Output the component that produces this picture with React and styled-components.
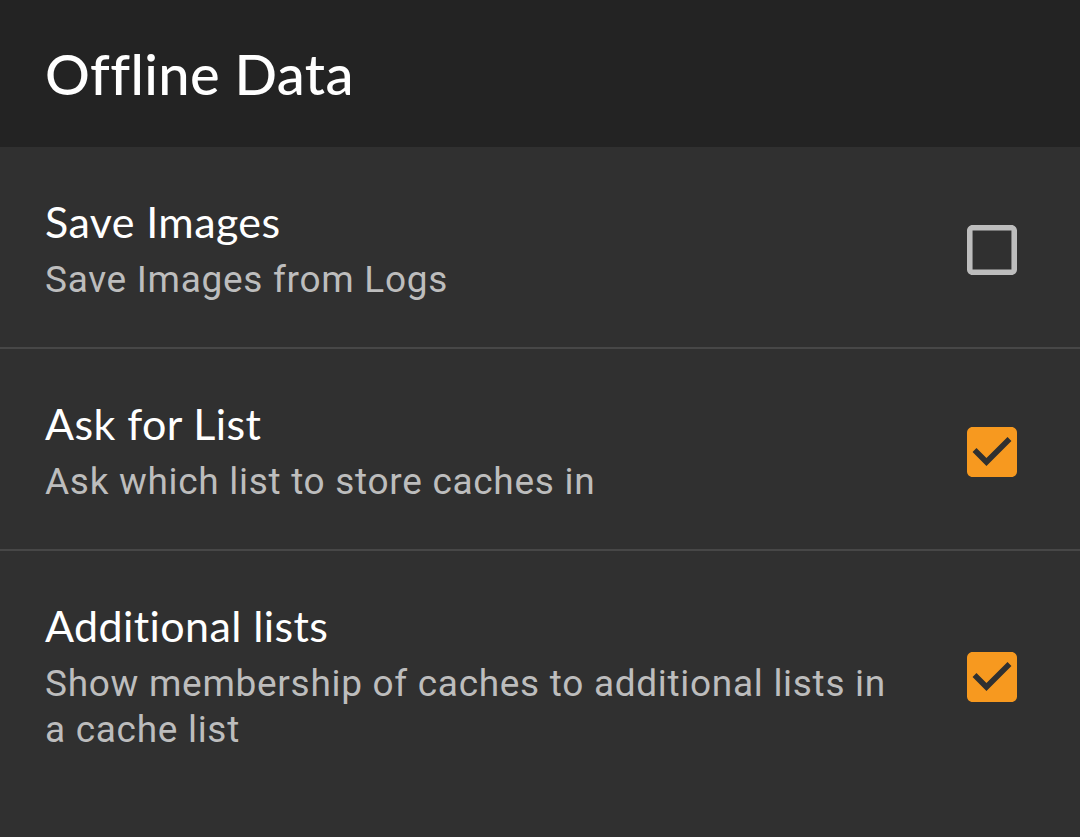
import React from "react";
import styled, { createGlobalStyle } from "styled-components";

const GlobalStyle = createGlobalStyle`
  html, body, #root {
    margin: 0;
    padding: 0;
    min-height: 100%;
    background: #303030;
  }
  body {
    -webkit-font-smoothing: antialiased;
  }
`;

const Page = styled.div`
  width: 1080px;
  min-height: 837px;
  background: #303030;
  display: flex;
  flex-direction: column;
`;

const Toolbar = styled.header`
  height: 147px;
  background: #232323;
  display: flex;
  align-items: center;
  padding-left: 45px;
  box-sizing: border-box;
`;

const ToolbarTitle = styled.h1`
  margin: 0;
  font-family: "Lato", "Roboto", sans-serif;
  font-weight: 500;
  font-size: 56px;
  line-height: 1;
  letter-spacing: 0.4px;
  color: #ffffff;
`;

const List = styled.div`
  display: flex;
  flex-direction: column;
`;

const Row = styled.div`
  display: flex;
  align-items: center;
  padding: 49px 63px 44px 45px;
  gap: 60px;
  border-top: ${(p) => (p.$divider ? "2px solid #474747" : "none")};
`;

const TextBlock = styled.div`
  flex: 1;
  min-width: 0;
  display: flex;
  flex-direction: column;
`;

const Title = styled.div`
  font-family: "Lato", "Roboto", sans-serif;
  font-size: 43px;
  line-height: 52px;
  letter-spacing: 0.4px;
  color: #ffffff;
`;

const Summary = styled.div`
  margin-top: 9px;
  font-family: "Roboto", sans-serif;
  font-size: 37px;
  line-height: 46px;
  letter-spacing: 0.7px;
  color: #bdbdbd;
`;

const Box = styled.svg`
  width: 50px;
  height: 50px;
  flex: none;
  display: block;
`;

function CheckBox({ checked }) {
  if (checked) {
    return (
      <Box viewBox="3 3 18 18">
        <path
          fill="#f7991f"
          d="M19 3H5c-1.11 0-2 .9-2 2v14c0 1.1.89 2 2 2h14c1.11 0 2-.9 2-2V5c0-1.1-.89-2-2-2z"
        />
        <path
          fill="#303030"
          d="M10 17l-5-5 1.41-1.41L10 14.17l7.59-7.59L19 8l-9 9z"
        />
      </Box>
    );
  }
  return (
    <Box viewBox="3 3 18 18">
      <path
        fill="#bdbdbd"
        d="M19 5v14H5V5h14m0-2H5c-1.1 0-2 .9-2 2v14c0 1.1.9 2 2 2h14c1.1 0 2-.9 2-2V5c0-1.1-.9-2-2-2z"
      />
    </Box>
  );
}

const items = [
  { title: "Save Images", summary: "Save Images from Logs", checked: false },
  { title: "Ask for List", summary: "Ask which list to store caches in", checked: true },
  {
    title: "Additional lists",
    summary: "Show membership of caches to additional lists in a cache list",
    checked: true,
  },
];

export default function App() {
  return (
    <>
      <GlobalStyle />
      <Page>
        <Toolbar>
          <ToolbarTitle>Offline Data</ToolbarTitle>
        </Toolbar>
        <List>
          {items.map((it, i) => (
            <Row key={it.title} $divider={i > 0}>
              <TextBlock>
                <Title>{it.title}</Title>
                <Summary>{it.summary}</Summary>
              </TextBlock>
              <CheckBox checked={it.checked} />
            </Row>
          ))}
        </List>
      </Page>
    </>
  );
}
